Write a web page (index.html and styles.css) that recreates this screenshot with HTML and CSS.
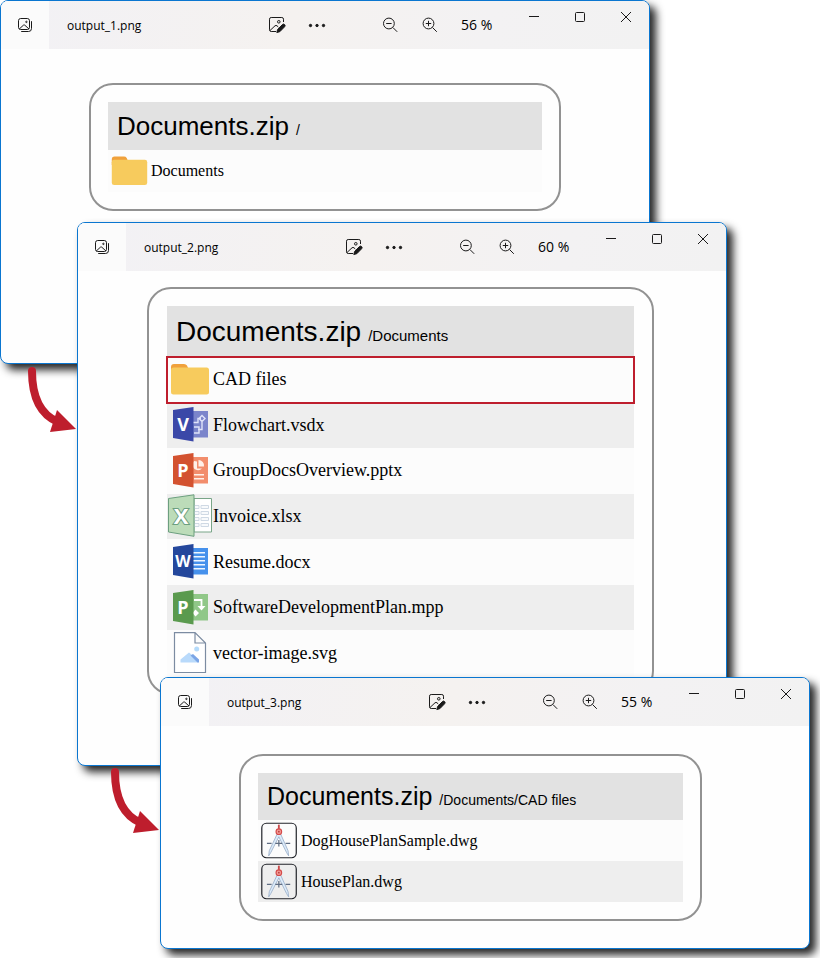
FILE: index.html
```html
<!DOCTYPE html>
<html lang="en">
<head>
<meta charset="utf-8">
<meta name="viewport" content="width=device-width, initial-scale=1">
<title>Documents.zip</title>
<link rel="stylesheet" href="styles.css">
</head>
<body>
<svg class="sprite" aria-hidden="true">
  <!-- Toolbar icons -->
  <symbol id="gallery" viewBox="0 0 16 16">
    <rect x="1.5" y="1.5" width="11" height="11" rx="2.2"/>
    <path d="M2.3 12l4.1-3.8q.7-.6 1.4 0L12 12M14.5 4.2v7.3a3 3 0 0 1-3 3H4.2"/>
    <circle cx="9.4" cy="4.9" r=".7"/>
  </symbol>
  <symbol id="edit" viewBox="0 0 18 18">
    <path d="M8 15.5H3.2A1.7 1.7 0 0 1 1.5 13.8V3.2A1.7 1.7 0 0 1 3.2 1.5h10.6a1.7 1.7 0 0 1 1.7 1.7V6M2 14.5l5-4.7q1-.8 2 0l1.3 1.2"/>
    <circle cx="10.8" cy="5.8" r="1.3"/>
    <path class="solid" d="M8.8 16.5l.8-3 4.8-4.9a1.5 1.5 0 0 1 2.200 2.200l-4.800 4.900z"/>
  </symbol>
  <symbol id="dots" viewBox="0 0 18 18">
    <g class="solid"><circle cx="2.5" cy="9.5" r="1.2"/><circle cx="9" cy="9.5" r="1.2"/><circle cx="15.5" cy="9.5" r="1.2"/></g>
  </symbol>
  <symbol id="zoom-out" viewBox="0 0 16 16">
    <circle cx="6.9" cy="6.5" r="5.4"/><path d="M10.9 10.5l4.300 4.300M4.200 6.500h5.400"/>
  </symbol>
  <symbol id="zoom-in" viewBox="0 0 16 16">
    <circle cx="6.5" cy="6.5" r="5.4"/><path d="M10.5 10.5l4.300 4.300M3.800 6.500h5.400M6.500 3.800v5.400"/>
  </symbol>
  <symbol id="minimize" viewBox="0 0 12 12"><path d="M1 5.5h10"/></symbol>
  <symbol id="maximize" viewBox="0 0 12 12"><rect x="1.5" y="1.5" width="9" height="9" rx="1"/></symbol>
  <symbol id="close" viewBox="0 0 12 12"><path d="M1 1l10 10M11 1L1 11"/></symbol>

  <!-- File type icons used more than once -->
  <symbol id="folder" viewBox="0 0 44 44">
    <path fill="#f0a13c" d="M3 15V9a3 3 0 0 1 3-3h10q2 0 3 1.6L20.500 11H30v5z"/>
    <rect x="3" y="9.5" width="38" height="27" rx="2.5" fill="#f7cb5d"/>
  </symbol>
  <symbol id="dwg" viewBox="0 0 44 44">
    <rect x="3" y="3.5" width="37" height="37" rx="5" fill="none" stroke="#23252b" stroke-width="1.3"/>
    <path fill="#dcebfa" stroke="#9aafc9" stroke-width=".9" d="M19.500 15l-8.500 18-.6 5.500 2.200-3.500L21.300 18l8.300 17 2.200 3.500-.6-5.500-8-18z"/>
    <path stroke="#5f6d83" stroke-width="1.3" d="M8.500 25h5M17.500 25h7.500M28.500 25h5M21.300 21.500v7"/>
    <path stroke="#c94c4c" stroke-width="2" d="M21.300 5v5"/>
    <circle cx="21.3" cy="12.5" r="3" fill="#f29a94" stroke="#d54a4a" stroke-width="1.2"/>
    <circle cx="21.3" cy="12.5" r=".9" fill="#b63b3b"/>
  </symbol>
  <symbol id="arrow" viewBox="0 0 52 68">
    <path d="M8 6q0 40 26 51" fill="none" stroke="#be1e2d" stroke-width="8" stroke-linecap="round"/>
    <path d="M33 45l19 19-26 3z" fill="#be1e2d"/>
  </symbol>
</svg>

<main class="desktop">
  <section class="window window-root" aria-label="output_1.png">
    <header class="titlebar">
      <button class="gallery" aria-label="Gallery"><svg class="icon"><use href="#gallery"/></svg></button>
      <h2 class="filename">output_1.png</h2>
      <div class="tools">
        <button class="tool" aria-label="Edit"><svg class="icon icon-large"><use href="#edit"/></svg></button>
        <button class="tool" aria-label="More"><svg class="icon icon-large"><use href="#dots"/></svg></button>
      </div>
      <div class="tools zoom">
        <button class="tool" aria-label="Zoom out"><svg class="icon"><use href="#zoom-out"/></svg></button>
        <button class="tool" aria-label="Zoom in"><svg class="icon"><use href="#zoom-in"/></svg></button>
        <span class="percent">56 %</span>
      </div>
      <div class="caption">
        <button aria-label="Minimize"><svg class="icon icon-small"><use href="#minimize"/></svg></button>
        <button aria-label="Maximize"><svg class="icon icon-small"><use href="#maximize"/></svg></button>
        <button aria-label="Close"><svg class="icon icon-small"><use href="#close"/></svg></button>
      </div>
    </header>
    <div class="canvas">
      <article class="card">
        <h1 class="archive">Documents.zip <small>/</small></h1>
        <ul class="files">
          <li><svg class="type"><use href="#folder"/></svg>Documents</li>
        </ul>
      </article>
    </div>
  </section>

  <svg class="arrow arrow-first" aria-hidden="true"><use href="#arrow"/></svg>

  <section class="window window-documents" aria-label="output_2.png">
    <header class="titlebar">
      <button class="gallery" aria-label="Gallery"><svg class="icon"><use href="#gallery"/></svg></button>
      <h2 class="filename">output_2.png</h2>
      <div class="tools">
        <button class="tool" aria-label="Edit"><svg class="icon icon-large"><use href="#edit"/></svg></button>
        <button class="tool" aria-label="More"><svg class="icon icon-large"><use href="#dots"/></svg></button>
      </div>
      <div class="tools zoom">
        <button class="tool" aria-label="Zoom out"><svg class="icon"><use href="#zoom-out"/></svg></button>
        <button class="tool" aria-label="Zoom in"><svg class="icon"><use href="#zoom-in"/></svg></button>
        <span class="percent">60 %</span>
      </div>
      <div class="caption">
        <button aria-label="Minimize"><svg class="icon icon-small"><use href="#minimize"/></svg></button>
        <button aria-label="Maximize"><svg class="icon icon-small"><use href="#maximize"/></svg></button>
        <button aria-label="Close"><svg class="icon icon-small"><use href="#close"/></svg></button>
      </div>
    </header>
    <div class="canvas">
      <article class="card">
        <h1 class="archive">Documents.zip <small>/Documents</small></h1>
        <ul class="files">
          <li class="selected"><svg class="type"><use href="#folder"/></svg>CAD files</li>
          <li>
            <svg class="type" viewBox="0 0 44 44">
              <path fill="#7b85cb" d="M25 8h15v26.500H25z"/>
              <path fill="none" stroke="#dfe3fa" stroke-width="1.4" d="M25 19.500h5v-4h3M34 12.500l3 3-3 3-3-3zM34 18.500v8h-4M26 24h5v6h-5"/>
              <path fill="#3b48a8" d="M5 7l20.500-3v34.500L5 35z"/>
              <text class="letter" x="15" y="28">V</text>
            </svg>Flowchart.vsdx
          </li>
          <li>
            <svg class="type" viewBox="0 0 44 44">
              <path fill="#f28d6c" d="M25 8h15v26.500H25z"/>
              <path fill="#fff0e8" d="M26 12a5 5 0 1 0 8 7.500h-5v-7zM30.500 11a5.500 5.500 0 0 1 5.500 6.500h-5.500zM26 25h10v1.500H26zM26 29h10v1.500H26z"/>
              <path fill="#d35230" d="M5 7l20.500-3v34.500L5 35z"/>
              <text class="letter" x="15" y="28">P</text>
            </svg>GroupDocsOverview.pptx
          </li>
          <li>
            <svg class="type" viewBox="0 0 44 44">
              <path fill="#fff" stroke="#79a588" d="M26 4.500h17.500V38H26z"/>
              <path fill="#f8fafc" stroke="#cfd9e4" d="M26.500 11.500h4.500v3h-4.500zM33 11.500h7.500v3H33zM26.500 17.500h4.500v3h-4.500zM33 17.500h7.500v3H33zM26.500 23.500h4.500v3h-4.500zM33 23.500h7.500v3H33zM26.500 29.500h4.500v3h-4.500zM33 29.500h7.500v3H33z"/>
              <path fill="#bcdcb9" stroke="#6c9f7f" d="M.5 4.500L26 .8v41.500L.5 38z"/>
              <text class="letter letter-outline" x="13" y="30">X</text>
            </svg>Invoice.xlsx
          </li>
          <li>
            <svg class="type" viewBox="0 0 44 44">
              <path fill="#4691ec" d="M25 8h15v26.500H25z"/>
              <path stroke="#eef6ff" stroke-width="1.5" d="M25 12.700h12M25 16.700h12M25 20.700h12M25 24.700h12M25 28.700h12"/>
              <path fill="#24479c" d="M5 7l20.500-3v34.500L5 35z"/>
              <text class="letter letter-wide" x="15" y="27">W</text>
            </svg>Resume.docx
          </li>
          <li>
            <svg class="type" viewBox="0 0 44 44">
              <path fill="#90c788" d="M25 8h15v26.500H25z"/>
              <path fill="none" stroke="#fff" stroke-width="1.8" d="M26 14h7.500v7"/>
              <path fill="#fff" d="M29.500 20h8l-4 4.500zM27.500 23.500l3.500 3.500-3.500 3.500-3-3.500z"/>
              <path fill="#5a9a4e" d="M5 7l20.500-3v34.500L5 35z"/>
              <text class="letter" x="15" y="28">P</text>
            </svg>SoftwareDevelopmentPlan.mpp
          </li>
          <li>
            <svg class="type" viewBox="0 0 44 44">
              <path fill="#fff" stroke="#7c8ca2" stroke-width="1.2" d="M6.500 1.600H27L37.500 12v29.500h-31zM27 1.600V12h10.500"/>
              <circle cx="28.7" cy="18" r="2.5" fill="#b5dbfb"/>
              <path fill="#b9dafb" d="M12.500 31.500v-3l8.500-7 9 7.500v2.500z"/>
              <path fill="#7ba5e6" d="M22.500 24.500l2.500-1.500 6 5.500v3h-1.500z"/>
            </svg>vector-image.svg
          </li>
        </ul>
      </article>
    </div>
  </section>

  <svg class="arrow arrow-second" aria-hidden="true"><use href="#arrow"/></svg>

  <section class="window window-cad" aria-label="output_3.png">
    <header class="titlebar">
      <button class="gallery" aria-label="Gallery"><svg class="icon"><use href="#gallery"/></svg></button>
      <h2 class="filename">output_3.png</h2>
      <div class="tools">
        <button class="tool" aria-label="Edit"><svg class="icon icon-large"><use href="#edit"/></svg></button>
        <button class="tool" aria-label="More"><svg class="icon icon-large"><use href="#dots"/></svg></button>
      </div>
      <div class="tools zoom">
        <button class="tool" aria-label="Zoom out"><svg class="icon"><use href="#zoom-out"/></svg></button>
        <button class="tool" aria-label="Zoom in"><svg class="icon"><use href="#zoom-in"/></svg></button>
        <span class="percent">55 %</span>
      </div>
      <div class="caption">
        <button aria-label="Minimize"><svg class="icon icon-small"><use href="#minimize"/></svg></button>
        <button aria-label="Maximize"><svg class="icon icon-small"><use href="#maximize"/></svg></button>
        <button aria-label="Close"><svg class="icon icon-small"><use href="#close"/></svg></button>
      </div>
    </header>
    <div class="canvas">
      <article class="card">
        <h1 class="archive">Documents.zip <small>/Documents/CAD files</small></h1>
        <ul class="files">
          <li><svg class="type"><use href="#dwg"/></svg>DogHousePlanSample.dwg</li>
          <li><svg class="type"><use href="#dwg"/></svg>HousePlan.dwg</li>
        </ul>
      </article>
    </div>
  </section>
</main>
</body>
</html>
```
FILE: styles.css
```css
* {
  box-sizing: border-box;
}

body {
  margin: 0;
  background: #fff;
  color: #000;
  font-family: "Open Sans", "Noto Sans", sans-serif;
}

h1,
h2,
ul {
  margin: 0;
  padding: 0;
  font-weight: 400;
  list-style: none;
}

button {
  display: flex;
  align-items: center;
  justify-content: center;
  padding: 0;
  border: 0;
  background: none;
  color: inherit;
}

.sprite {
  display: none;
}

/* Desktop with three cascading windows */
.desktop {
  position: relative;
  min-height: 958px;
  overflow: hidden;
}

.window {
  --head: 48px;
  --row: 42px;
  --type: 41px;
  --title-size: 26px;
  --path-size: 14px;
  --name-size: 16px;
  position: absolute;
  width: calc(100% - 170px);
  border: 1px solid #0a76d0;
  border-radius: 8px;
  background: #fefefe;
  box-shadow: 6px 6px 8px rgba(0, 0, 0, 0.85);
}

.window-root {
  top: 0;
  left: 0;
}

.window-documents {
  --head: 51px;
  --type: 44px;
  --title-size: 28px;
  --path-size: 15px;
  --name-size: 18px;
  top: 222px;
  left: 77px;
}

.window-cad {
  --head: 47px;
  --row: 41px;
  --title-size: 25px;
  top: 677px;
  left: 160px;
}

.arrow {
  position: absolute;
  width: 52px;
  height: 68px;
}

.arrow-first {
  top: 365px;
  left: 24px;
}

.arrow-second {
  top: 766px;
  left: 107px;
}

/* Title bar */
.titlebar {
  display: flex;
  align-items: stretch;
  height: 48px;
  overflow: hidden;
  border-radius: 7px 7px 0 0;
  background: linear-gradient(100deg, #f2f1f5, #f5f2f0 45%, #f3f2f3 75%, #f2f2f2);
}

.gallery {
  width: 48px;
  background: #fbfbfb;
}

.filename {
  display: flex;
  flex: 1;
  align-items: center;
  padding: 0 18px;
  font-size: 12px;
  white-space: nowrap;
}

.tools {
  display: flex;
  align-items: center;
}

.zoom {
  margin-left: 33px;
}

.tool {
  width: 40px;
  height: 40px;
}

.percent {
  width: 61px;
  padding-left: 11px;
  font-size: 14px;
  line-height: 18px;
  white-space: nowrap;
}

.caption {
  display: flex;
  align-items: flex-start;
}

.caption button {
  width: 46px;
  height: 32px;
}

.icon {
  width: 16px;
  height: 16px;
  fill: none;
  stroke: #1a1a1a;
  stroke-width: 1;
}

.icon-large {
  width: 18px;
  height: 18px;
}

.icon-small {
  width: 12px;
  height: 12px;
}

.solid {
  fill: #1a1a1a;
}

/* Rendered page */
.canvas {
  padding: 34px 88px 152px;
}

.window-documents .canvas {
  padding: 16px 72px 70px 69px;
}

.window-cad .canvas {
  padding: 28px 107px 27px 78px;
}

.card {
  padding: 17px;
  border: 2px solid #929292;
  border-radius: 24px;
}

.window-documents .card {
  padding: 17px 18px;
}

.archive {
  display: flex;
  align-items: baseline;
  gap: 7px;
  height: var(--head);
  padding-left: 9px;
  background: #e2e2e2;
  font-family: "Liberation Sans", sans-serif;
  font-size: var(--title-size);
  line-height: var(--head);
  white-space: nowrap;
}

.archive small {
  font-size: var(--path-size);
}

.files {
  display: grid;
  grid-auto-rows: minmax(var(--row), 1fr);
  font-family: "Liberation Serif", serif;
  font-size: var(--name-size);
}

.window-documents .files {
  min-height: 319px;
}

.files li {
  display: flex;
  align-items: center;
  gap: 1px;
  padding-left: 1px;
  background: #fcfcfc;
  white-space: nowrap;
}

.files li:nth-child(even) {
  background: #eee;
}

.files .selected {
  position: relative;
  z-index: 1;
  outline: 2px solid #be1e2d;
  outline-offset: -1px;
}

.type {
  flex: none;
  width: var(--type);
  height: var(--type);
}

.letter {
  fill: #fff;
  font-family: "Open Sans", sans-serif;
  font-size: 18px;
  font-weight: 700;
  text-anchor: middle;
}

.letter-wide {
  font-size: 16px;
}

.letter-outline {
  font-size: 22px;
  paint-order: stroke;
  stroke: #6c9f7f;
  stroke-width: 2;
}
```
